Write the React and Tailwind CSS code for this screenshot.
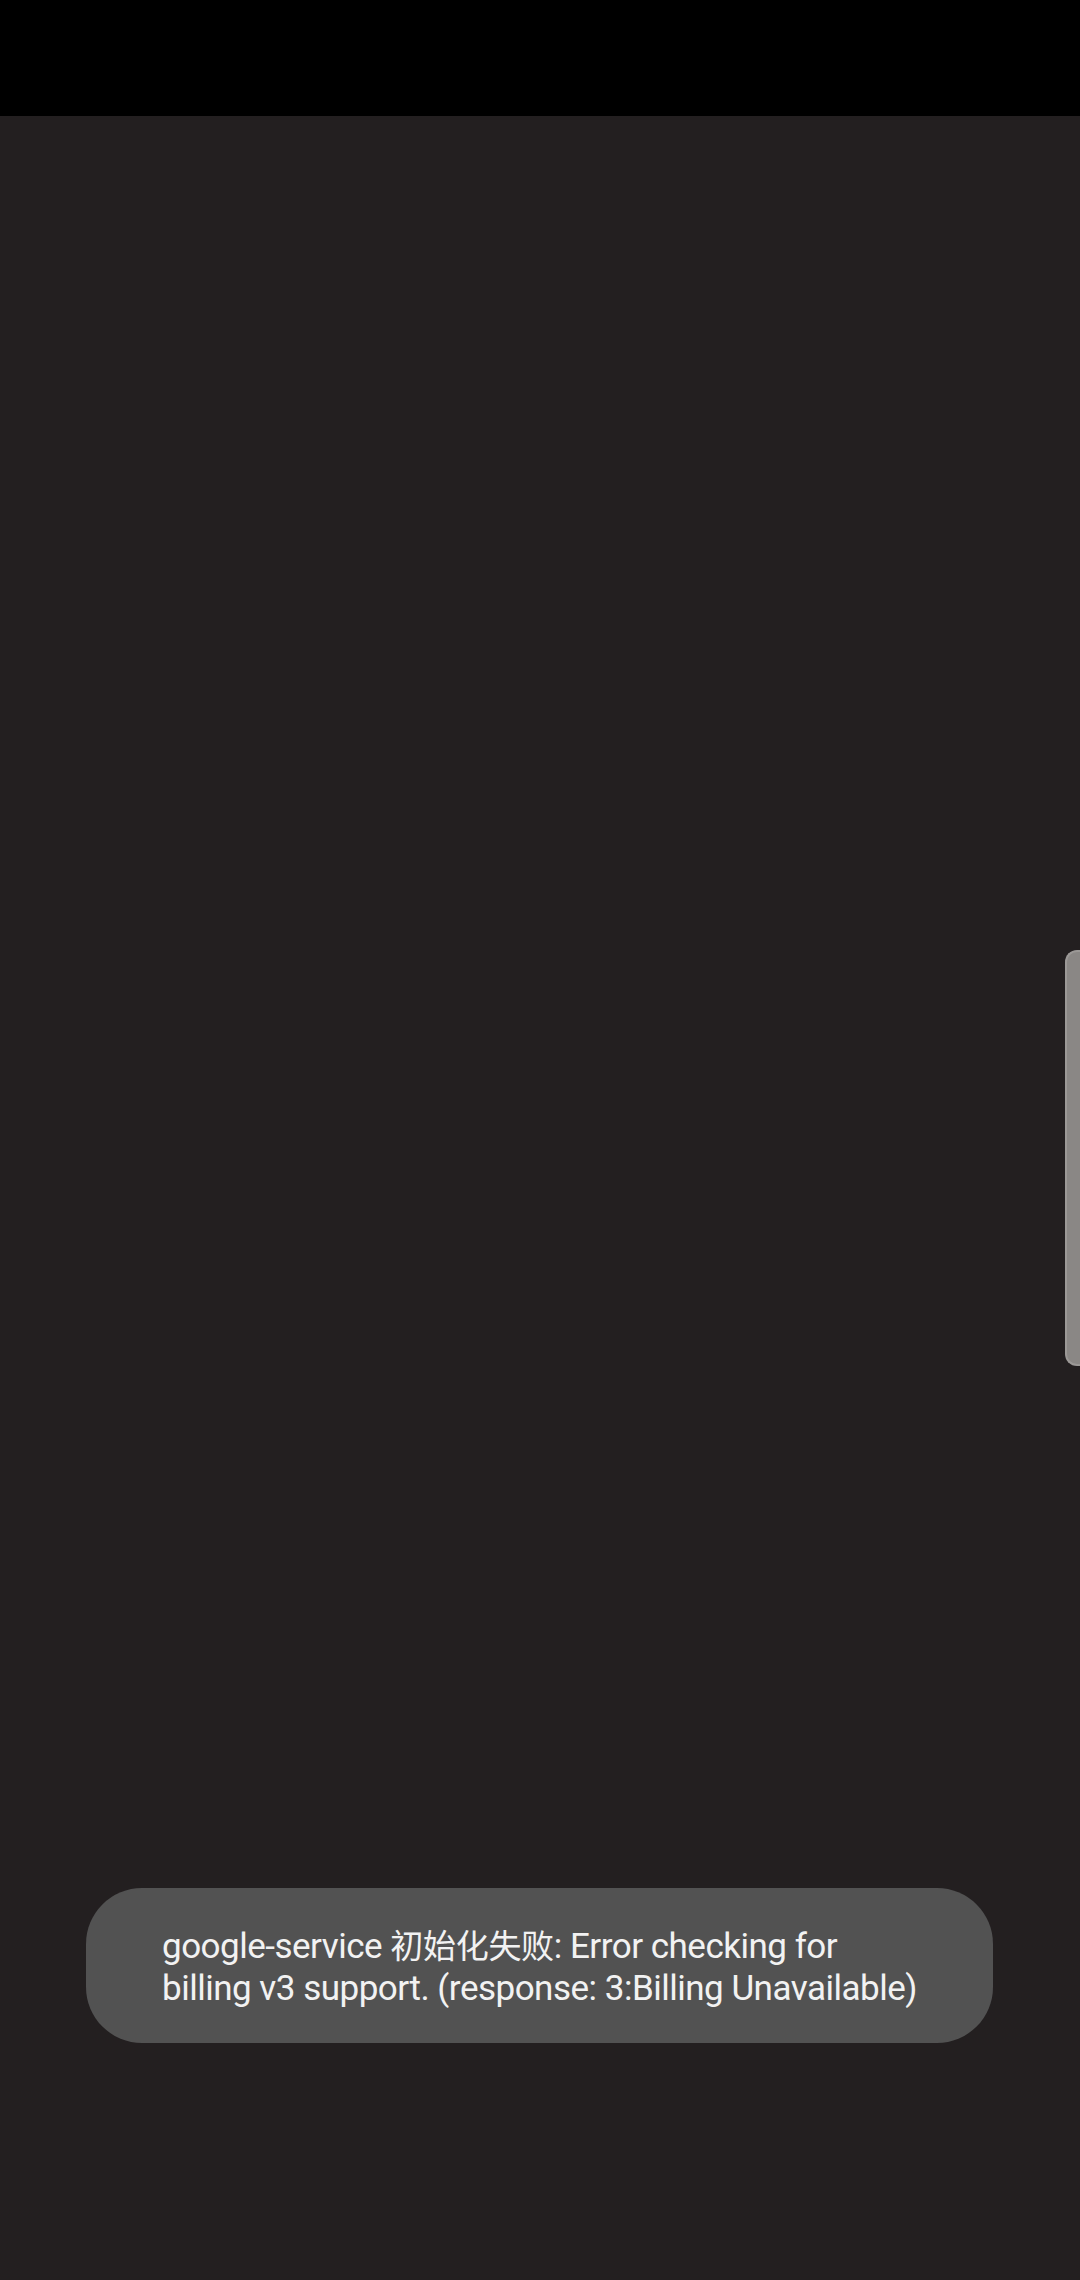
export default function App() {
  return (
    <div className="w-[1080px] h-[2280px] bg-[#231f20] flex flex-col overflow-hidden relative" style={{ fontFamily: 'Roboto, "Noto Sans CJK SC", sans-serif' }}>
      <div className="h-[116px] bg-black shrink-0" />
      <div className="flex-1 relative">
        <div className="absolute left-[1065px] top-[834px] w-[40px] h-[416px] rounded-l-[12px] bg-[#8a8785] border-l-2 border-y-2 border-[#9b9896]" />
        <div className="absolute left-[86px] top-[1772px] w-[907px] h-[155px] rounded-[56px] bg-[#525252] flex items-center pl-[76px] pr-[40px]">
          <p className="text-[35px] leading-[42px] text-[#f2f2f2] tracking-[-0.5px] pt-[2px]">
            google-service <span className="text-[33px] tracking-[-0.3px]" style={{ fontFamily: '"Noto Sans CJK SC", sans-serif' }}>初始化失败</span>: Error checking for<br />billing v3 support. (response: 3:Billing Unavailable)
          </p>
        </div>
      </div>
    </div>
  );
}
